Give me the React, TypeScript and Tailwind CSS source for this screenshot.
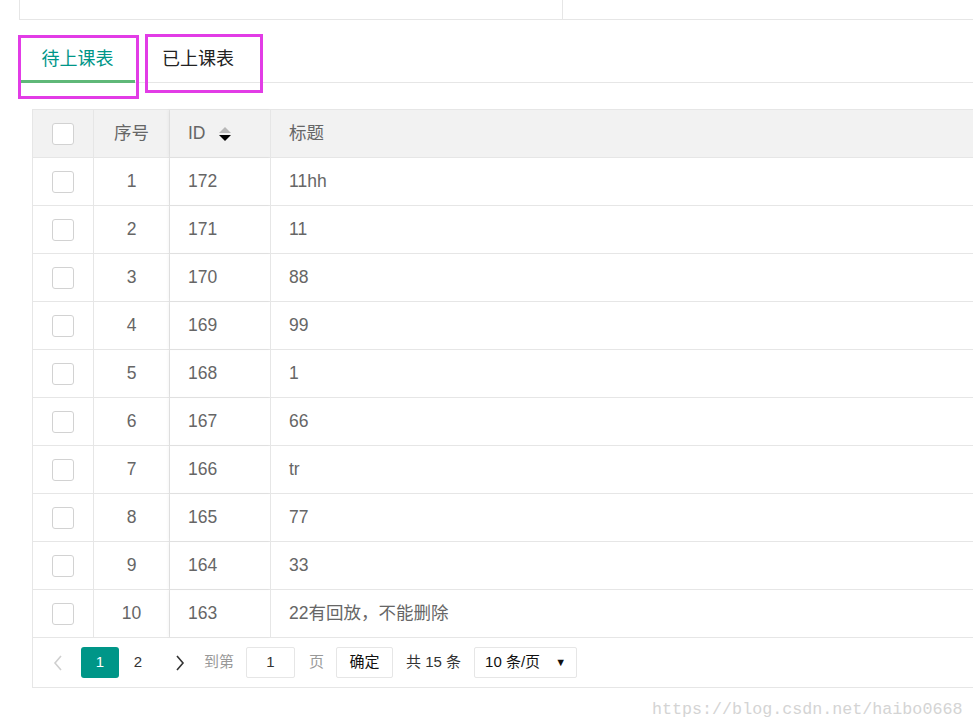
import React from "react";

const rows: [string, string, string][] = [
  ["1", "172", "11hh"],
  ["2", "171", "11"],
  ["3", "170", "88"],
  ["4", "169", "99"],
  ["5", "168", "1"],
  ["6", "167", "66"],
  ["7", "166", "tr"],
  ["8", "165", "77"],
  ["9", "164", "33"],
  ["10", "163", "22有回放，不能删除"],
];

function Checkbox() {
  return <div className="h-[22px] w-[22px] rounded-[3px] border border-[#d2d2d2] bg-white" />;
}

function SortIcon() {
  return (
    <svg width="12" height="15" viewBox="0 0 12 15" className="ml-[13px] mt-[2px]">
      <polygon points="6,0 12,6 0,6" fill="#b8b8b8" />
      <polygon points="0,8 12,8 6,14" fill="#000" />
    </svg>
  );
}

export default function App() {
  return (
    <div className="relative h-[728px] w-[973px] overflow-hidden bg-white font-['Liberation_Sans','Noto_Sans_CJK_SC',sans-serif]">
      {/* top box */}
      <div className="ml-[19px] flex h-[20px] w-[1000px] border-b border-l border-[#e6e6e6]">
        <div className="w-[543px] border-r border-[#e6e6e6]" />
      </div>

      {/* tabs */}
      <div className="ml-[20px] mt-[13px] flex h-[50px] w-[1000px] border-b border-[#e6e6e6] text-[18px]">
        <div className="relative flex w-[115px] items-center justify-center pt-[3px] text-[#009688]">
          待上课表
          <span className="absolute bottom-[-1px] left-0 right-0 h-[3px] bg-[#5fb878]" />
        </div>
        <div className="flex w-[115px] items-center pl-[27px] pt-[3px] text-[#222]">已上课表</div>
      </div>

      {/* table */}
      <div className="ml-[32px] mt-[26px] w-[1000px] border-l border-t border-[#e6e6e6] text-[17.5px] text-[#666]">
        <div className="flex h-[48px] border-b border-[#e6e6e6] bg-[#f2f2f2]">
          <div className="flex w-[61px] items-center justify-center border-r border-[#e6e6e6]">
            <Checkbox />
          </div>
          <div className="flex w-[76px] items-center justify-center border-r border-[#e6e6e6]">序号</div>
          <div className="flex w-[101px] items-center border-r border-[#e6e6e6] pl-[18px] shadow-[-2px_0_3px_rgba(0,0,0,0.04)]">
            ID
            <SortIcon />
          </div>
          <div className="flex flex-1 items-center pl-[18px]">标题</div>
        </div>
        {rows.map(([n, id, title]) => (
          <div key={n} className="flex h-[48px] border-b border-[#e6e6e6] bg-white">
            <div className="flex w-[61px] items-center justify-center border-r border-[#e6e6e6]">
              <Checkbox />
            </div>
            <div className="flex w-[76px] items-center justify-center border-r border-[#e6e6e6]">{n}</div>
            <div className="flex w-[101px] items-center border-r border-[#e6e6e6] pl-[18px] shadow-[-2px_0_3px_rgba(0,0,0,0.04)]">
              {id}
            </div>
            <div className="flex flex-1 items-center pl-[18px]">{title}</div>
          </div>
        ))}

        {/* pagination */}
        <div className="flex h-[50px] items-center border-b border-[#e6e6e6] pl-[19px] text-[15px]">
          <svg width="12" height="18" viewBox="0 0 12 18">
            <polyline points="9,2 3,9 9,16" fill="none" stroke="#cfcfcf" strokeWidth="1.6" />
          </svg>
          <div className="ml-[17px] flex h-[31px] w-[38px] items-center justify-center rounded-[3px] bg-[#009688] text-white">
            1
          </div>
          <div className="flex h-[31px] w-[38px] items-center justify-center text-[#333]">2</div>
          <div className="ml-[4px] flex h-[31px] w-[38px] items-center justify-center">
            <svg width="10" height="18" viewBox="0 0 10 18">
              <polyline points="2,2 8,9 2,16" fill="none" stroke="#333" strokeWidth="1.6" />
            </svg>
          </div>
          <span className="ml-[5px] text-[#999]">到第</span>
          <div className="ml-[12px] flex h-[31px] w-[49px] items-center justify-center rounded-[2px] border border-[#e6e6e6] text-[#333]">
            1
          </div>
          <span className="ml-[14px] text-[#999]">页</span>
          <div className="ml-[12px] flex h-[31px] w-[57px] items-center justify-center rounded-[2px] border border-[#e6e6e6] text-[#111]">
            确定
          </div>
          <span className="ml-[13px] text-[#333]">共 15 条</span>
          <div className="ml-[13px] flex h-[31px] w-[103px] items-center justify-between rounded-[2px] border border-[#e6e6e6] pl-[10px] pr-[10px] text-[#111]">
            <span>10 条/页</span>
            <span className="text-[11px]">▼</span>
          </div>
        </div>
      </div>

      {/* annotation boxes */}
      <div className="absolute left-[18px] top-[35px] h-[64px] w-[121px] border-[3px] border-[#e23ce6]" />
      <div className="absolute left-[145px] top-[34px] h-[59px] w-[118px] border-[3px] border-[#e23ce6]" />

      {/* watermark */}
      <div className="absolute left-[652px] top-[697px] font-['Liberation_Mono',monospace] text-[16.7px] text-[#d4d4d4]">
        https://blog.csdn.net/haibo0668
      </div>
    </div>
  );
}
